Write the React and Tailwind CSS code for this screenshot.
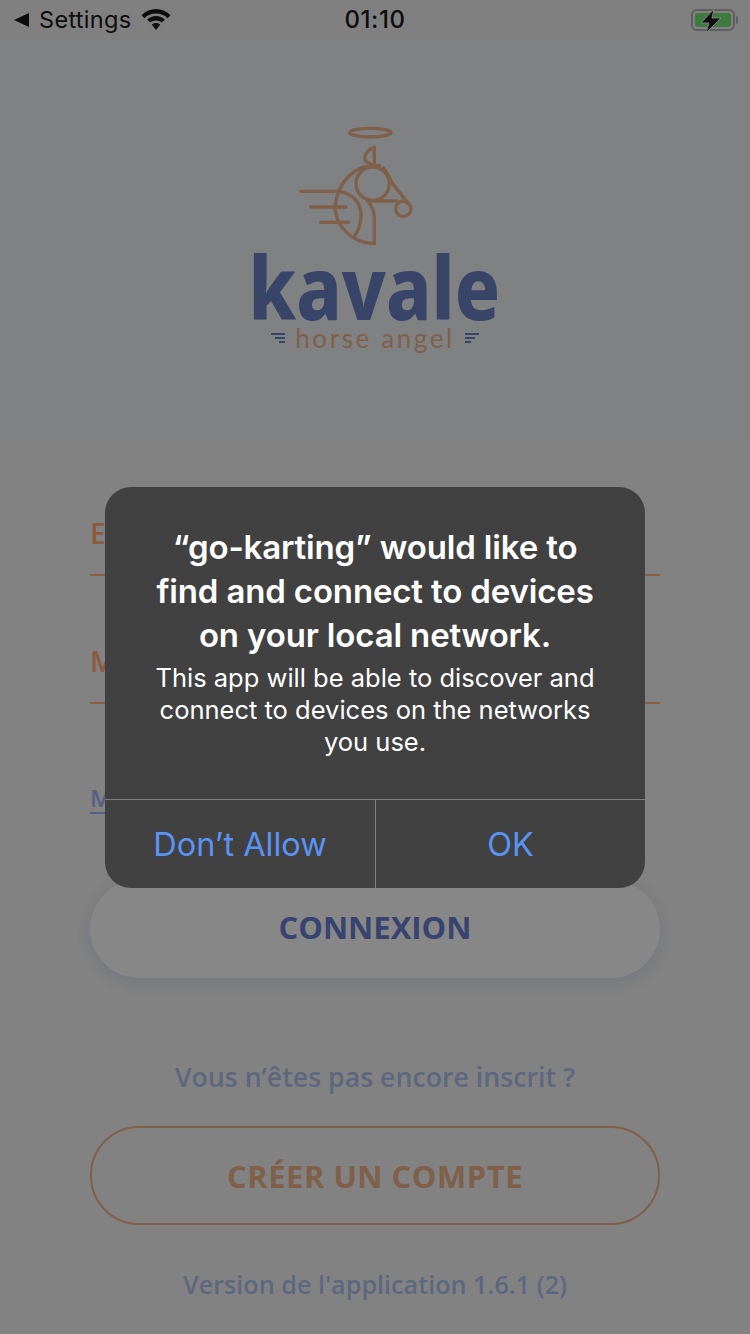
import React from 'react';

function HorseLogo() {
  return (
    <svg width="120" height="124" viewBox="170 40 360 372" fill="none" stroke="#80604a" strokeWidth="10" strokeLinecap="round" strokeLinejoin="round">
      <ellipse cx="393" cy="69" rx="62" ry="13" />
      <path d="M405 113 C385 118 372 140 378 152 C382 160 392 164 405 166 Z" />
      <circle cx="400" cy="222" r="50" />
      <path d="M420 168 C350 160 296 215 288 285 C284 345 335 400 405 402 L405 325 C405 300 392 282 385 274 L472 274" />
      <path d="M432 175 C440 182 450 205 460 222 L510 286" />
      <circle cx="492" cy="297" r="23" />
      <path d="M296 245 C340 250 365 280 365 315 C365 340 358 362 345 380" />
      <path d="M184 245 H300" />
      <path d="M214 292 H320" />
      <path d="M244 338 H328" />
    </svg>
  );
}

function Dashes({ flip }) {
  return (
    <div className={`flex w-[14px] flex-col gap-[2px] ${flip ? 'items-start' : 'items-end'}`}>
      <div className="h-[2px] w-[14px] bg-[#394469]" />
      <div className="h-[2px] w-[10px] bg-[#394469]" />
      <div className="h-[2px] w-[6px] bg-[#394469]" />
    </div>
  );
}

function StatusBar() {
  return (
    <div className="flex h-10 items-center justify-between bg-[#808080] pl-[14px] pr-[12px] font-['Inter',sans-serif] text-[#0d0d0d]">
      <div className="flex items-center">
        <div className="h-0 w-0 border-y-[7px] border-r-[15px] border-y-transparent border-r-[#0d0d0d]" />
        <span className="ml-[10px] text-[23.5px] leading-none tracking-[0.3px]">Settings</span>
        <svg className="ml-[10px]" width="30" height="22" viewBox="0 0 30 22" fill="#0d0d0d">
          <path d="M15 0 C20.5 0 25.5 2.2 29.5 6.2 L26.6 9.2 C23.5 6.2 19.5 4.6 15 4.6 C10.5 4.6 6.5 6.2 3.4 9.2 L0.5 6.2 C4.5 2.2 9.5 0 15 0 Z" />
          <path d="M15 7 C18.3 7 21.4 8.3 23.8 10.6 L21 13.6 C19.4 12.2 17.3 11.4 15 11.4 C12.7 11.4 10.6 12.2 9 13.6 L6.2 10.6 C8.6 8.3 11.7 7 15 7 Z" />
          <path d="M15 14 C16.7 14 18.2 14.6 19.3 15.6 L15 21 L10.7 15.6 C11.8 14.6 13.3 14 15 14 Z" />
        </svg>
      </div>
      <span className="absolute left-0 right-0 text-center text-[24px] font-medium leading-none tracking-[0.6px]">01:10</span>
      <div className="flex items-center">
        <div className="relative flex h-[22px] w-[44px] items-center rounded-[6px] border-2 border-[#5f5f5f] p-[2px]">
          <div className="h-full w-full rounded-[3px] bg-[#3c7a3f]" />
          <svg className="absolute left-[6px] top-[-3px]" width="24" height="26" viewBox="0 0 24 26" fill="#0d0d0d" stroke="#808080" strokeWidth="1">
            <path d="M15 1 L2 15 H10 L7 25 L22 10 H13 Z" />
          </svg>
        </div>
        <div className="ml-[1px] h-[8px] w-[2px] rounded-r bg-[#5f5f5f]" />
      </div>
    </div>
  );
}

export default function App() {
  return (
    <div className="relative h-[1334px] w-[750px] overflow-hidden bg-[#828282] font-['Open_Sans',sans-serif]">
      <div className="h-[440px] bg-[#7f8183]">
        <StatusBar />
        <div className="flex flex-col items-center pt-[83px]">
          <div className="ml-[-38px]"><HorseLogo /></div>
          <div className="ml-[-1px] mt-[-6px] scale-x-[0.86] font-['Noto_Sans',sans-serif] text-[87px] font-extrabold leading-[90px] text-[#394469]">kavale</div>
          <div className="mt-[-9px] flex items-center gap-[10px]">
            <Dashes />
            <span className="font-['Lato',sans-serif] text-[26px] leading-[32px] tracking-[2.6px] text-[#80604a]">horse angel</span>
            <Dashes flip />
          </div>
        </div>
      </div>

      <div className="px-[90px]">
        <div className="mt-[73px] h-[63px] border-b-2 border-[#8c5f46] text-[28px] font-semibold leading-[40px] text-[#8c5a3e]">Email</div>
        <div className="mt-[65px] h-[63px] border-b-2 border-[#8c5f46] text-[28px] font-semibold leading-[40px] text-[#8c5a3e]">Mot de passe</div>
        <div className="mt-[80px] inline-block border-b-2 border-[#566084] text-[24px] font-semibold leading-[28px] text-[#566084]">Mot de passe oublié ?</div>
        <div className="mt-[66px] flex h-[98px] items-center justify-center rounded-[49px] bg-[#878787] pb-[3px] text-[31px] font-bold text-[#374470] shadow-[0_4px_14px_rgba(70,80,120,0.22)]">CONNEXION</div>
        <div className="mt-[81px] whitespace-nowrap text-center text-[26.7px] font-semibold leading-[36px] text-[#5e6780]">Vous n’êtes pas encore inscrit ?</div>
        <div className="mt-[31px] flex h-[99px] items-center justify-center rounded-[49px] border-2 border-[#80604a] pt-[2px] text-[31px] font-bold tracking-[0.5px] text-[#80604a]">CRÉER UN COMPTE</div>
        <div className="mt-[41px] whitespace-nowrap text-center text-[25.2px] font-semibold leading-[36px] text-[#5e6780]">Version de l'application 1.6.1 (2)</div>
      </div>

      <div className="absolute inset-0 flex items-start justify-center pt-[487px]">
        <div className="w-[540px] overflow-hidden rounded-[26px] bg-[#414141] font-['Inter',sans-serif]">
          <div className="h-[312px] px-[32px] pt-[38px] text-center text-white">
            <div className="whitespace-nowrap text-[33px] font-semibold leading-[44px] tracking-[-0.15px]">
              “go-karting” would like to<br />find and connect to devices<br />on your local network.
            </div>
            <div className="mt-[5px] text-[25.5px] leading-[32px]">This app will be able to discover and connect to devices on the networks you use.</div>
          </div>
          <div className="flex h-[89px] border-t border-[#7d7d7d] text-[32.4px] text-[#5b93f5]">
            <div className="flex w-[271px] items-center justify-center border-r border-[#7d7d7d] pt-[2px]">Don’t Allow</div>
            <div className="flex flex-1 items-center justify-center pt-[2px]">OK</div>
          </div>
        </div>
      </div>
    </div>
  );
}
